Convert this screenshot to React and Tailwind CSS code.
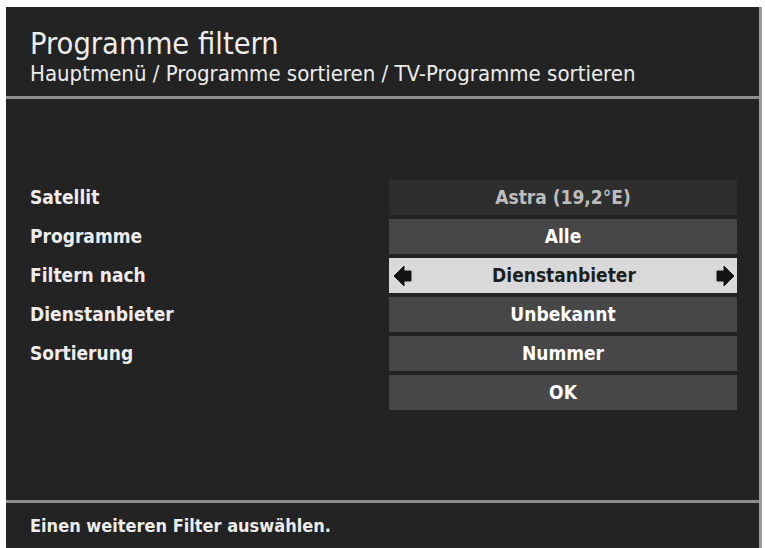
import React from 'react';

const rows = [
  { label: 'Satellit', value: 'Astra (19,2°E)', kind: 'dim' },
  { label: 'Programme', value: 'Alle' },
  { label: 'Filtern nach', value: 'Dienstanbieter', kind: 'active' },
  { label: 'Dienstanbieter', value: 'Unbekannt' },
  { label: 'Sortierung', value: 'Nummer' },
  { label: '', value: 'OK' },
];

function Arrow({ dir }) {
  // fat little arrow head with a short stem, like the receiver OSD
  const pts = dir === 'left'
    ? '0,10 10,0 10,5 17,5 17,15 10,15 10,20'
    : '18,10 8,0 8,5 1,5 1,15 8,15 8,20'
  return (
    <svg width="18" height="20" viewBox="0 0 18 20" className="shrink-0">
      <polygon points={pts} fill="#141414" strokeLinejoin="round" stroke="#141414" strokeWidth="1" />
    </svg>
  );
}

function ValueBox({ value, kind }) {
  if (kind === 'active') {
    return (
      <div className="h-[35px] bg-[#d9d9d9] flex items-center justify-between pl-[5px] pr-[3px] text-[#1e1e1e]">
        <Arrow dir="left" />
        <span className="font-bold">{value}</span>
        <Arrow dir="right" />
      </div>
    );
  }
  if (kind === 'dim') {
    return (
      <div className="h-[35px] bg-[#2e2e2e] flex items-center justify-center text-[#bdbdbd] font-bold">
        {value}
      </div>
    );
  }
  return (
    <div className="h-[35px] bg-[#474747] flex items-center justify-center text-white font-bold">
      {value}
    </div>
  );
}

export default function App() {
  return (
    <div
      className="w-[765px] h-[548px] bg-white pt-[7px] pl-[6px] pr-[3px] overflow-hidden"
      style={{ fontFamily: '"DejaVu Sans Condensed", "DejaVu Sans", sans-serif' }}
    >
      <div className="h-full bg-[#232323] border-r-[3px] border-[#9a9a9a] flex flex-col">
        {/* header */}
        <div className="h-[89px] px-[24px] pt-[20px] text-[#ececec]">
          <div className="text-[30.5px] leading-[34px]">Programme filtern</div>
          <div className="text-[22px] leading-[26px]">
            Hauptmenü / Programme sortieren / TV-Programme sortieren
          </div>
        </div>
        <div className="h-[3px] bg-[#8d8d8d]" />

        {/* settings list */}
        <div className="flex-1 pt-[81px] pl-[24px] pr-[22px]">
          <div className="flex flex-col gap-[4px] text-[19px]">
            {rows.map((r, i) => (
              <div key={i} className="flex items-center">
                <div className="w-[359px] text-[#ececec] font-bold">{r.label}</div>
                <div className="flex-1">
                  <ValueBox value={r.value} kind={r.kind} />
                </div>
              </div>
            ))}
          </div>
        </div>

        {/* help line */}
        <div className="h-[3px] bg-[#8d8d8d]" />
        <div className="h-[45px] px-[24px] flex items-center text-[18px] font-bold text-[#ececec] border-b border-[#2c2c2c]">
          Einen weiteren Filter auswählen.
        </div>
      </div>
    </div>
  );
}
